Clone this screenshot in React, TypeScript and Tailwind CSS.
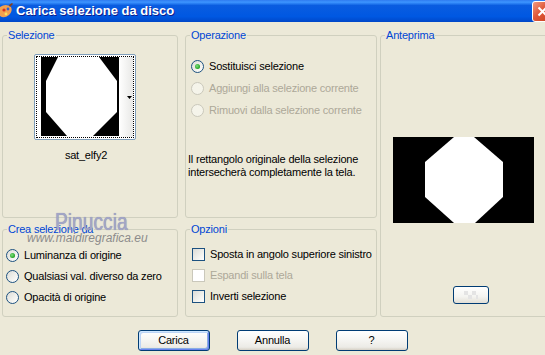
import React from 'react';

const Radio = ({ label, checked, disabled }: { label: string; checked?: boolean; disabled?: boolean }) => (
  <div className="flex items-center h-[21px] gap-[5px]">
    <span
      className={`flex items-center justify-center w-[13px] h-[13px] rounded-full border ${
        disabled
          ? 'border-[#CAC8BB] bg-[#F5F4EA]'
          : 'border-[#1C5180] bg-[linear-gradient(135deg,#DCDCD7_0%,#F2F2EE_60%,#FFFFFF_100%)]'
      }`}
    >
      {checked && (
        <span className="w-[5px] h-[5px] rounded-full bg-[radial-gradient(circle_at_40%_40%,#7FE07F_0%,#21A121_70%,#1A7F1A_100%)]" />
      )}
    </span>
    <span className={disabled ? 'text-[#ACA899]' : 'text-black'}>{label}</span>
  </div>
);

const Check = ({ label, disabled }: { label: string; disabled?: boolean }) => (
  <div className="flex items-center h-[21px] gap-[5px]">
    <span
      className={`w-[13px] h-[13px] border ${
        disabled
          ? 'border-[#CAC8BB] bg-white'
          : 'border-[#1C5180] bg-[linear-gradient(135deg,#DCDCD7_0%,#F2F2EE_60%,#FFFFFF_100%)]'
      }`}
    />
    <span className={disabled ? 'text-[#ACA899]' : 'text-black'}>{label}</span>
  </div>
);

const GroupBox = ({ title, className, children }: { title: string; className: string; children?: React.ReactNode }) => (
  <fieldset className={`min-w-0 border border-[#D0D0BF] rounded-[3px] ${className}`}>
    <legend className="ml-[4px] px-[1px] leading-[13px] text-[#0046D5]">{title}</legend>
    {children}
  </fieldset>
);

const XpButton = ({ label, isDefault }: { label: string; isDefault?: boolean }) => (
  <button
    className={`h-[21px] w-[72px] rounded-[3px] border border-[#003C74] text-black leading-none bg-[linear-gradient(to_bottom,#FFFFFF_0%,#F6F6F3_45%,#ECEBE6_85%,#D6D0C5_100%)] ${
      isDefault ? 'shadow-[inset_1px_1px_0_#CEE7FF,inset_-1px_-1px_0_#6982EE,inset_2px_2px_0_#BCD4F6,inset_-2px_-2px_0_#89ADE4]' : ''
    }`}
  >
    {label}
  </button>
);

const Octagon = ({ w, h, points }: { w: number; h: number; points: string }) => (
  <svg width={w} height={h} viewBox={`0 0 ${w} ${h}`} className="block">
    <rect width={w} height={h} fill="#000" />
    <polygon points={points} fill="#fff" />
  </svg>
);

const App: React.FC = () => {
  return (
    <div className="relative w-[545px] h-[355px] overflow-hidden bg-[#ECE9D8] text-[11px] tracking-[-0.2px] font-['Liberation_Sans',Arial,sans-serif]">
      {/* title bar */}
      <div className="flex items-center h-[22px] bg-[linear-gradient(to_bottom,#2F7BF0_0%,#3D95FF_10%,#0A5CE0_25%,#0058E2_75%,#0047C8_100%)]">
        <svg width="13" height="16" viewBox="0 0 13 16" className="shrink-0">
          <path d="M0 4 Q6 0 11 4 Q13 8 9 12 Q4 16 0 13 Z" fill="#F0A050" />
          <circle cx="4" cy="7" r="1.6" fill="#D83020" />
          <circle cx="8" cy="6" r="1.4" fill="#3060D0" />
          <circle cx="6" cy="11" r="1.4" fill="#F8E060" />
          <path d="M9 2 L12 0 L13 1 L10 4 Z" fill="#804020" />
        </svg>
        <span className="ml-[3px] text-white font-bold text-[13px] tracking-normal [text-shadow:1px_1px_#0F1D8C]">
          Carica selezione da disco
        </span>
        <div className="ml-auto -mr-[8px] mt-[1px] shrink-0 w-[21px] h-[21px] rounded-[3px] border border-white bg-[linear-gradient(135deg,#F09A80_0%,#E0583A_45%,#C8401F_100%)] flex items-center justify-center">
          <svg width="11" height="11" viewBox="0 0 11 11">
            <path d="M1.5 1.5 L9.5 9.5 M9.5 1.5 L1.5 9.5" stroke="#fff" strokeWidth="2" />
          </svg>
        </div>
      </div>

      {/* body */}
      <div className="flex pt-[7px] pl-[2px]">
        <div className="flex flex-col gap-[5px] w-[176px] shrink-0">
          <GroupBox title="Selezione" className="h-[189px]">
            <div className="pl-[31px] pt-[12px]">
              <div className="w-[102px] h-[86px] rounded-[2px] border border-[#7F9DB9] bg-white p-[1px]">
                <div className="flex h-full border border-dotted border-black">
                  <div className="ml-[4px]">
                    <Octagon w={78} h={79} points="17,0 58,0 76,24 76,55 52,79 26,79 5,55 5,24" />
                  </div>
                  <div className="flex flex-1 items-center justify-end pr-[1px] bg-[linear-gradient(to_right,#FFFFFF_0%,#E8E8E6_100%)]">
                    <svg width="5" height="3" viewBox="0 0 5 3">
                      <path d="M0 0 H5 L2.5 3 Z" fill="#000" />
                    </svg>
                  </div>
                </div>
              </div>
              <div className="w-[104px] mt-[9px] text-center leading-[13px]">sat_elfy2</div>
            </div>
          </GroupBox>
          <GroupBox title="Crea selezione da" className="h-[94px]">
            <div className="pl-[3px] pt-[9px]">
              <Radio label="Luminanza di origine" checked />
              <Radio label="Qualsiasi val. diverso da zero" />
              <Radio label="Opacità di origine" />
            </div>
          </GroupBox>
        </div>

        <div className="flex flex-col gap-[5px] w-[192px] ml-[7px] shrink-0">
          <GroupBox title="Operazione" className="h-[189px]">
            <div className="pl-[5px] pt-[13px]">
              <div className="flex flex-col [&>div]:h-[22px]">
                <Radio label="Sostituisci selezione" checked />
                <Radio label="Aggiungi alla selezione corrente" disabled />
                <Radio label="Rimuovi dalla selezione corrente" disabled />
              </div>
            </div>
            <p className="pl-[2px] mt-[32px] leading-[13px]">
              Il rettangolo originale della selezione
              <br />
              intersecherà completamente la tela.
            </p>
          </GroupBox>
          <GroupBox title="Opzioni" className="h-[94px]">
            <div className="pl-[6px] pt-[8px]">
              <Check label="Sposta in angolo superiore sinistro" />
              <Check label="Espandi sulla tela" disabled />
              <Check label="Inverti selezione" />
            </div>
          </GroupBox>
        </div>

        <div className="ml-[3px] w-[180px] shrink-0">
          <GroupBox title="Anteprima" className="h-[288px]">
            <div className="pl-[12px] pt-[95px]">
              <Octagon w={141} h={86} points="61,0 81,0 110,25 110,60 82,86 61,86 32,60 32,25" />
              <div className="ml-[60px] mt-[63px] w-[36px] h-[18px] rounded-[3px] border border-[#003C74] bg-[linear-gradient(to_bottom,#FFFFFF_0%,#F4F4F0_60%,#E2DFD6_100%)] flex items-center justify-center">
                <svg width="14" height="8" viewBox="0 0 14 8">
                  <rect x="0" y="0" width="4" height="4" fill="#E4E4E4" />
                  <rect x="8" y="0" width="4" height="4" fill="#E4E4E4" />
                  <rect x="4" y="4" width="4" height="4" fill="#E4E4E4" />
                  <rect x="12" y="4" width="2" height="4" fill="#E4E4E4" />
                </svg>
              </div>
            </div>
          </GroupBox>
        </div>
      </div>

      {/* buttons */}
      <div className="flex justify-center gap-[27px] mt-[13px]">
        <XpButton label="Carica" isDefault />
        <XpButton label="Annulla" />
        <XpButton label="?" />
      </div>

      {/* watermark */}
      <div className="absolute left-[55px] top-[210px] text-[24px] leading-none tracking-normal text-[#A3A6C6] origin-left scale-x-[0.8] [text-shadow:0_0_1px_#7F83A8]">
        Pinuccia
      </div>
      <div className="absolute left-[27px] top-[232px] text-[12px] leading-none italic tracking-normal text-[#8C8C8C]">
        www.maidiregrafica.eu
      </div>
    </div>
  );
};

export default App;
